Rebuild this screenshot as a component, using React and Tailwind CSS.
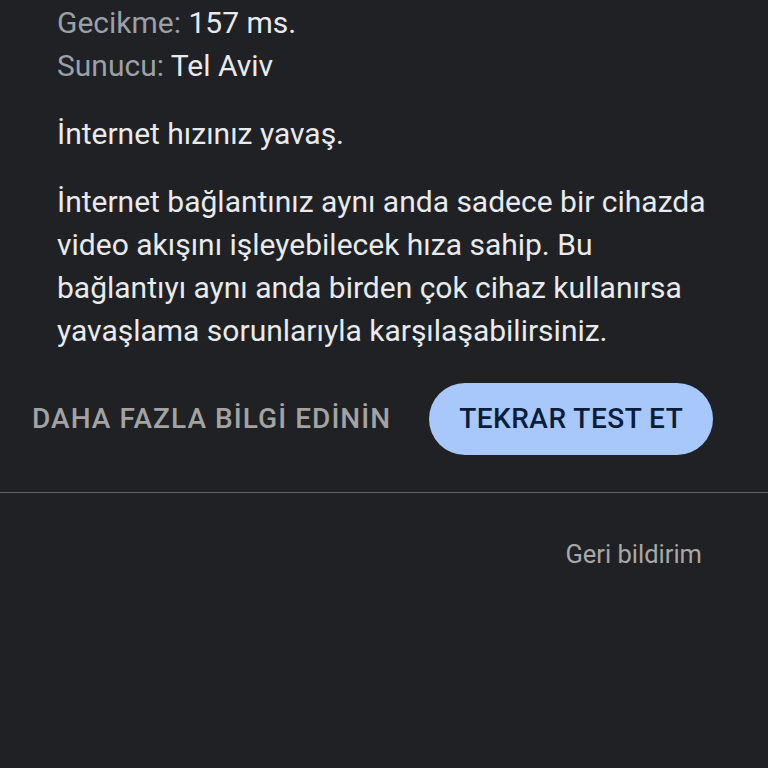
import React from 'react';

const App = () => {
  return (
    <div className="w-[768px] h-[768px] overflow-hidden bg-[#202124] text-[#e8eaed]" style={{ fontFamily: 'Roboto, "Noto Sans", sans-serif' }}>
      <div className="pl-[57px] w-[720px] pt-[1px]">
        <div className="text-[30px] leading-[43px]">
          <div><span className="text-[#9aa0a6]">Gecikme:</span> 157 ms.</div>
          <div><span className="text-[#9aa0a6]">Sunucu:</span> Tel Aviv</div>
        </div>
        <p className="mt-[25px] text-[30px] leading-[43px]">İnternet hızınız yavaş.</p>
        <p className="mt-[25px] text-[30px] leading-[43px]">
          İnternet bağlantınız aynı anda sadece bir cihazda video akışını işleyebilecek hıza sahip. Bu bağlantıyı aynı anda birden çok cihaz kullanırsa yavaşlama sorunlarıyla karşılaşabilirsiniz.
        </p>
      </div>
      <div className="flex items-center pl-[32px] mt-[31px]">
        <button className="text-[28px] font-medium tracking-[1.05px] text-[#a3a3a3]">DAHA FAZLA BİLGİ EDİNİN</button>
        <button className="ml-[38px] w-[284px] h-[72px] rounded-full bg-[#a8c7fa] text-[28px] font-medium tracking-[0.5px] text-[#0b1d3a]">TEKRAR TEST ET</button>
      </div>
      <div className="mt-[37px] h-px bg-[#5f6368]" />
      <div className="flex justify-end pr-[66px] mt-[42px]">
        <span className="text-[25.5px] text-[#a8a8a8]">Geri bildirim</span>
      </div>
    </div>
  );
};

export default App;
